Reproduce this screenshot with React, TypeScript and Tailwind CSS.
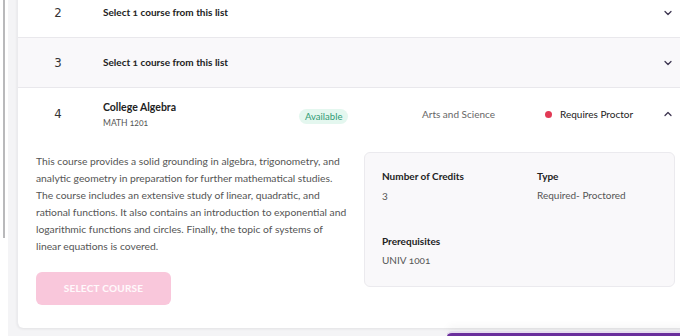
import { ChevronDown, ChevronUp } from 'lucide-react'

const font = { fontFamily: 'Lato, "Open Sans", sans-serif' }

const description = [
  'This course provides a solid grounding in algebra, trigonometry, and',
  'analytic geometry in preparation for further mathematical studies.',
  'The course includes an extensive study of linear, quadratic, and',
  'rational functions. It also contains an introduction to exponential and',
  'logarithmic functions and circles. Finally, the topic of systems of',
  'linear equations is covered.',
]

function CollapsedRow({ n, shaded }: { n: number; shaded?: boolean }) {
  return (
    <div
      className={`flex h-[50px] items-center border-b border-[#e9e8ec] pr-[26px] ${shaded ? 'bg-[#f9f8fa]' : 'bg-white'}`}
    >
      <div className="w-[80px] text-center font-['Liberation_Sans_Narrow','DejaVu_Sans_Condensed',sans-serif] text-[13px] text-[#333]">
        {n}
      </div>
      <div className="ml-[5px] flex-1 text-[10px] font-bold text-[#222] [font-variant-numeric:oldstyle-nums]">
        Select 1 course from this list
      </div>
      <ChevronDown className="h-[12px] w-[12px] text-[#3d3550]" strokeWidth={2.5} />
    </div>
  )
}

export default function App() {
  return (
    <div className="relative flex h-[336px] w-[680px] overflow-hidden bg-[#f4f4f6]" style={font}>
      {/* scrollbar */}
      <div className="flex w-[8px] shrink-0 justify-center bg-white">
        <div className="h-[238px] w-[2px] bg-[#b9b9bb]" />
      </div>

      <div className="ml-[9px] -mt-3 h-[340px] w-[683px] shrink-0 overflow-hidden rounded-bl-md border-l border-[#ebebee] bg-white shadow-[0_1px_3px_rgba(0,0,0,0.08)]">
        <CollapsedRow n={2} />
        <CollapsedRow n={3} shaded />

        {/* expanded row */}
        <div className="flex h-[52px] items-center pr-[26px]">
          <div className="w-[80px] text-center font-['Liberation_Sans_Narrow','DejaVu_Sans_Condensed',sans-serif] text-[13px] text-[#333]">
            4
          </div>
          <div className="ml-[5px] w-[196px]">
            <div className="text-[10.5px] font-bold leading-[14px] text-[#222]">College Algebra</div>
            <div className="mt-[3px] text-[8.5px] leading-[12px] text-[#555] [font-variant-numeric:oldstyle-nums]">
              MATH 1201
            </div>
          </div>
          <div className="w-[123px]">
            <span className="rounded-full bg-[#e4f7ef] px-[6px] py-[2px] text-[9.5px] text-[#2f9b74]">Available</span>
          </div>
          <div className="w-[123px] text-[10px] text-[#666]">Arts and Science</div>
          <div className="flex flex-1 items-center gap-[8px]">
            <span className="h-[7px] w-[7px] rounded-full bg-[#e23a55]" />
            <span className="text-[10px] text-[#222]">Requires Proctor</span>
          </div>
          <ChevronUp className="h-[12px] w-[12px] text-[#3d3550]" strokeWidth={2.5} />
        </div>

        <div className="flex gap-[18px] pl-[18px] pt-[12px]">
          <div className="w-[310px] pt-[1px]">
            <p className="whitespace-nowrap text-[10.3px] leading-[17px] text-[#555]">
              {description.map((line) => (
                <span key={line} className="block">
                  {line}
                </span>
              ))}
            </p>
            <button className="mt-[17px] h-[33px] w-[135px] rounded-md bg-[#f9c7db] text-[10px] font-bold tracking-wide text-white/90">
              SELECT COURSE
            </button>
          </div>

          <div className="h-[135px] w-[311px] rounded-md border border-[#ebeaee] bg-[#f9f8fa] pl-[17px] pt-[16px]">
            <div className="grid grid-cols-[155px_1fr] gap-y-[31px] text-[10px] leading-[14px]">
              <div>
                <div className="font-bold text-[#222]">Number of Credits</div>
                <div className="mt-[6px] text-[#555]">3</div>
              </div>
              <div>
                <div className="font-bold text-[#222]">Type</div>
                <div className="mt-[5px] text-[#555]">Required- Proctored</div>
              </div>
              <div>
                <div className="font-bold text-[#222]">Prerequisites</div>
                <div className="mt-[5px] text-[#555] [font-variant-numeric:oldstyle-nums]">UNIV 1001</div>
              </div>
            </div>
          </div>
        </div>
      </div>

      {/* bottom bar peeking in */}
      <div className="absolute bottom-0 left-[447px] h-[5px] w-[240px] rounded-tl-md border-t-2 border-[#e6dcef] bg-[#6a2e9c] shadow-[0_-4px_8px_rgba(0,0,0,0.06)]" />
    </div>
  )
}
